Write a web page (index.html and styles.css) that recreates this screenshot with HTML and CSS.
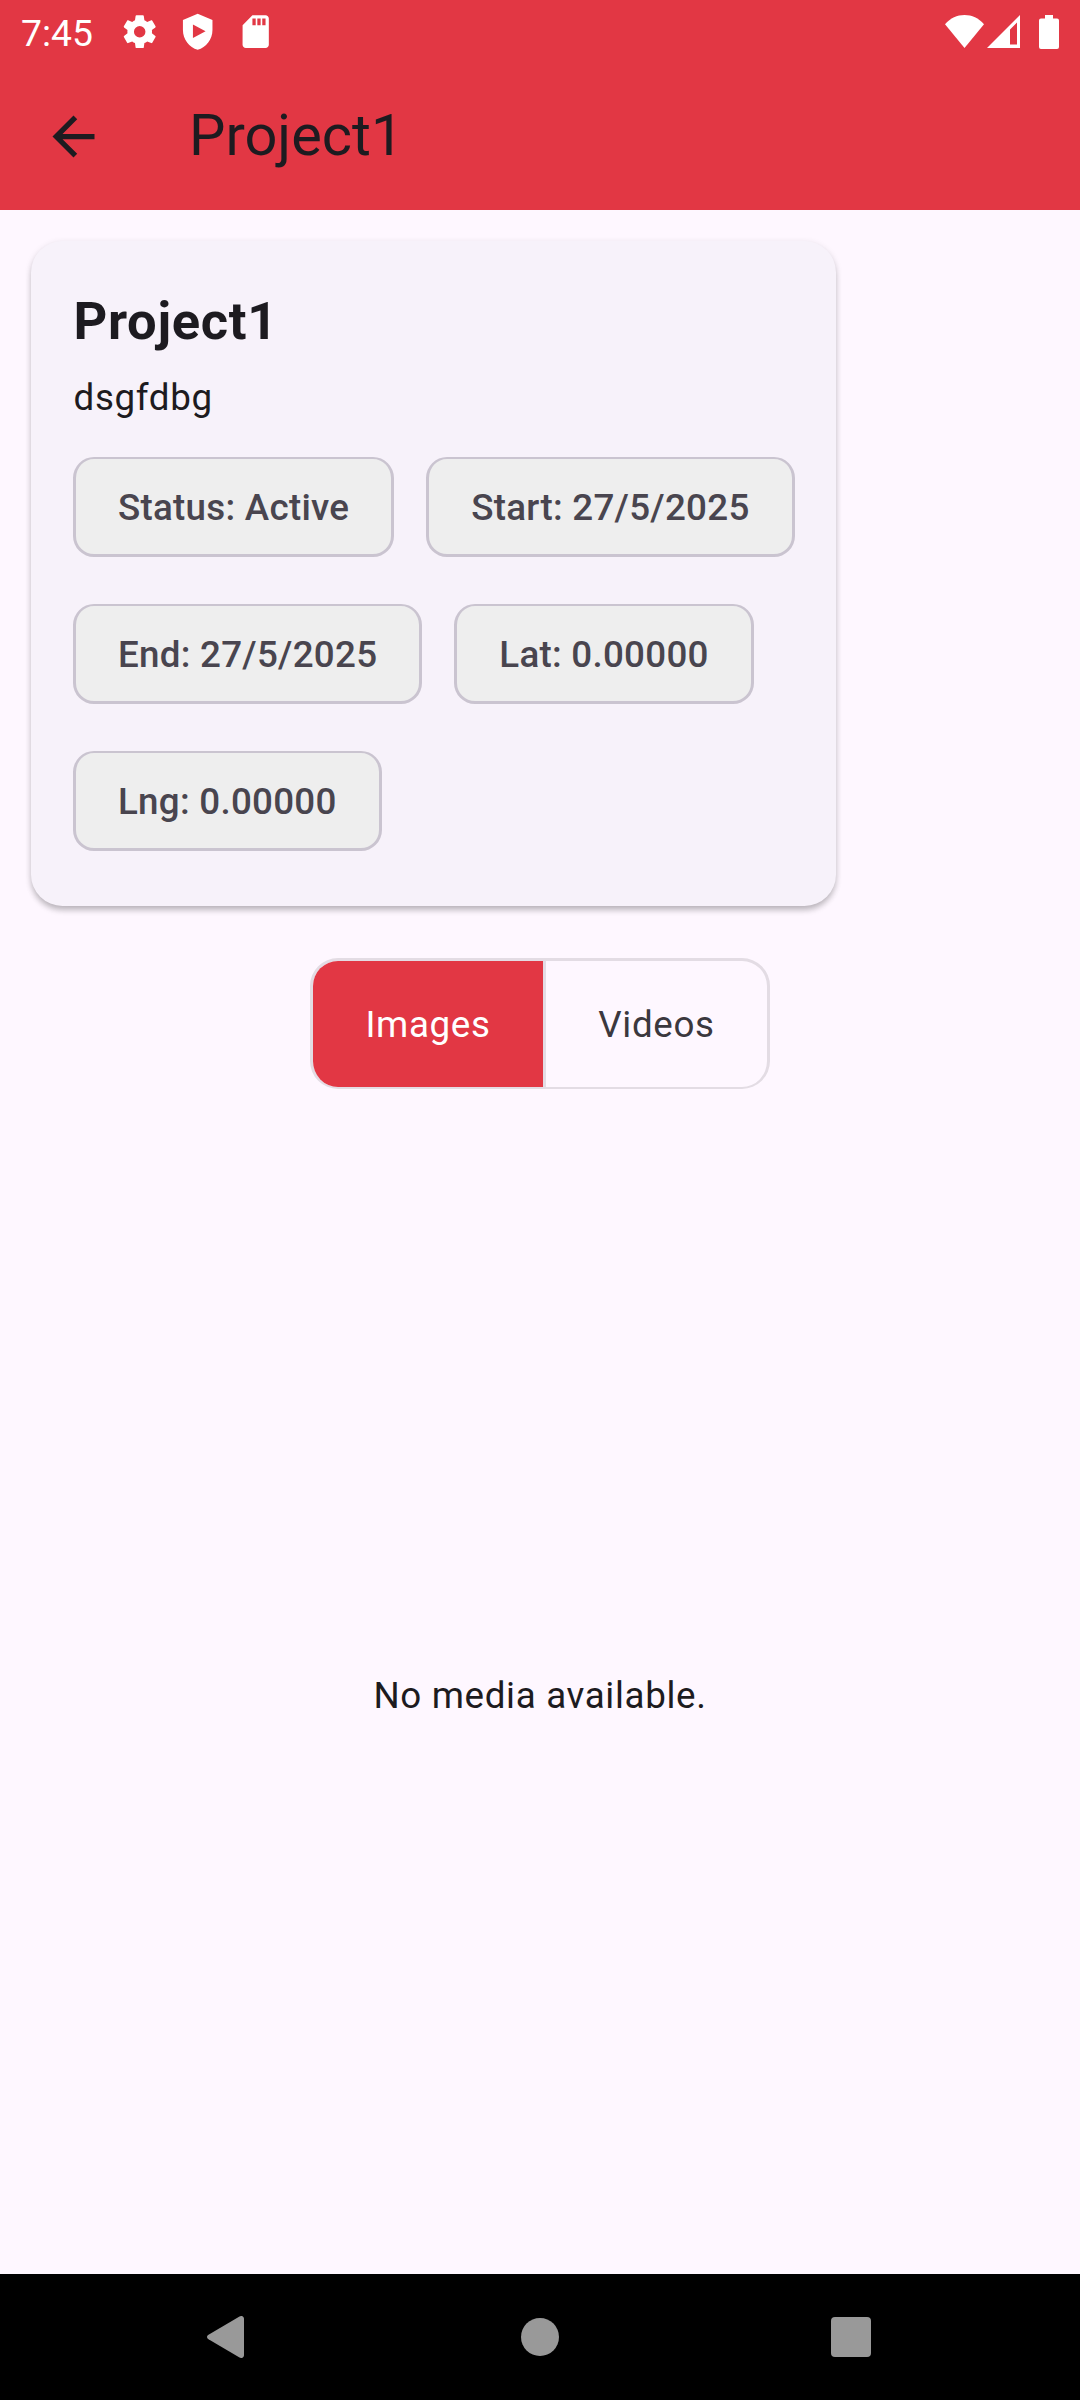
FILE: index.html
```html
<!DOCTYPE html>
<html lang="en">
<head>
<meta charset="utf-8">
<title>Project1</title>
<link rel="stylesheet" href="styles.css">
</head>
<body>
<div class="screen">
  <header class="header">
    <div class="status-bar">
      <span class="clock">7:45</span>
      <div class="status-left">
        <svg class="status-icon" viewBox="0 0 24 24"><path d="M19.43 12.98c.04-.32.07-.64.07-.98s-.03-.66-.07-.98l2.11-1.65c.19-.15.24-.42.12-.64l-2-3.46c-.12-.22-.39-.3-.61-.22l-2.49 1c-.52-.4-1.08-.73-1.69-.98l-.38-2.65A.49.49 0 0 0 14 2h-4c-.25 0-.46.18-.49.42l-.38 2.65c-.61.25-1.17.59-1.69.98l-2.49-1c-.23-.09-.49 0-.61.22l-2 3.46c-.13.22-.07.49.12.64l2.11 1.65c-.04.32-.07.65-.07.98s.03.66.07.98l-2.11 1.65c-.19.15-.24.42-.12.64l2 3.46c.12.22.39.3.61.22l2.49-1c.52.4 1.08.73 1.69.98l.38 2.65c.03.24.24.42.49.42h4c.25 0 .46-.18.49-.42l.38-2.65c.61-.25 1.17-.59 1.69-.98l2.49 1c.23.09.49 0 .61-.22l2-3.46c.12-.22.07-.49-.12-.64zM12 15.5a3.5 3.5 0 1 1 0-7 3.5 3.5 0 0 1 0 7z"/></svg>
        <svg class="status-icon" viewBox="0 0 24 24"><path fill-rule="evenodd" d="M12 1 3 4.8V11c0 5.55 3.84 10.74 9 12 5.16-1.26 9-6.45 9-12V4.8zM9.1 7.6v8.2l7.7-4.1z"/></svg>
        <svg class="status-icon" viewBox="0 0 24 24"><path d="M18 2h-8L4.020 8 4 20c0 1.100.9 2 2 2h12c1.100 0 2-.9 2-2V4c0-1.100-.9-2-2-2zm-6 6h-2V4h2zm3 0h-2V4h2zm3 0h-2V4h2z"/></svg>
      </div>
      <div class="status-right">
        <svg class="wifi" viewBox="0 0 39 33"><path d="M19.500 33 0 9.200C5.500 3 12 0 19.500 0S33.500 3 39 9.200z"/></svg>
        <svg class="signal" viewBox="0 0 33 33"><path fill-rule="evenodd" d="M33 0v33H0zM30 7.500l-7 7V29.500h7z"/></svg>
        <svg class="battery" viewBox="0 0 20 34"><path d="M6 0h8v3.500h4a2 2 0 0 1 2 2V32a2 2 0 0 1-2 2H2a2 2 0 0 1-2-2V5.500a2 2 0 0 1 2-2h4z"/></svg>
      </div>
    </div>
    <div class="app-bar">
      <svg class="back" viewBox="0 0 24 24"><path d="M20 11H7.830l5.590-5.590L12 4l-8 8 8 8 1.410-1.410L7.830 13H20z"/></svg>
      <h1 class="app-title">Project1</h1>
    </div>
  </header>

  <main class="content">
    <section class="card">
      <h2 class="card-title">Project1</h2>
      <p class="card-text">dsgfdbg</p>
      <div class="chips">
        <span class="chip">Status: Active</span>
        <span class="chip">Start: 27/5/2025</span>
        <span class="chip">End: 27/5/2025</span>
        <span class="chip">Lat: 0.00000</span>
        <span class="chip">Lng: 0.00000</span>
      </div>
    </section>
    <div class="toggle">
      <button class="toggle-item selected">Images</button>
      <button class="toggle-item">Videos</button>
    </div>
    <div class="empty">No media available.</div>
  </main>

  <nav class="nav-bar">
    <svg class="nav-back" viewBox="0 0 37 42"><path d="M32.500.5C34.800-.8 37 .5 37 3v36c0 2.500-2.200 3.800-4.500 2.500L1.500 23.200c-2-1.200-2-3.200 0-4.400z"/></svg>
    <svg class="nav-home" viewBox="0 0 38 38"><circle cx="19" cy="19" r="19"/></svg>
    <svg class="nav-recent" viewBox="0 0 40 40"><rect width="40" height="40" rx="4"/></svg>
  </nav>
</div>
</body>
</html>
```
FILE: styles.css
```css
* { box-sizing: border-box; }

body {
  margin: 0;
  font-family: Roboto, sans-serif;
  color: #1d1b20;
}

svg { display: block; flex: none; }

.screen {
  width: 1080px;
  height: 2400px;
  display: flex;
  flex-direction: column;
  background: #fef7ff;
}

.header { height: 210px; background: #e23744; }

.status-bar {
  height: 63px;
  display: flex;
  align-items: center;
  padding: 0 21px 0 21px;
  color: #fff;
  fill: #fff;
}

.clock { width: 99px; font-size: 37.300px; line-height: 43px; padding-top: 3px; }

.status-left { display: flex; gap: 18.600px; }
.status-icon { width: 39.400px; height: 39.400px; }

.status-right { display: flex; margin-left: auto; }
.wifi { width: 39px; height: 33px; }
.signal { width: 33px; height: 33px; margin-left: 3px; }
.battery { width: 20px; height: 34px; margin-left: 19px; }

.app-bar {
  height: 147px;
  display: flex;
  align-items: center;
  padding-left: 42px;
}

.back { width: 63px; height: 63px; fill: #1d1b20; }

.app-title {
  margin: 0 0 2px 84px;
  font-size: 57.750px;
  font-weight: 400;
  line-height: 73.500px;
}

.content {
  flex: 1;
  display: flex;
  flex-direction: column;
  padding-top: 31px;
}

.card {
  width: 805px;
  height: 665px;
  margin-left: 31px;
  padding: 43px 0 0 42px;
  border-radius: 31.500px;
  background: #f7f2fa;
  box-shadow: 0 5px 6px -1px rgba(0, 0, 0, .2), 0 2px 7px rgba(0, 0, 0, .12);
}

.card-title {
  margin: 0 0 0 .5px;
  font-size: 52.500px;
  font-weight: 700;
  line-height: 75px;
  letter-spacing: .656px;
}

.card-text {
  margin: 12px 0 0 .5px;
  font-size: 36.750px;
  line-height: 53px;
  letter-spacing: .656px;
}

.chips {
  display: flex;
  flex-wrap: wrap;
  gap: 47px 32px;
  padding-top: 33px;
}

.chip {
  height: 100px;
  padding: 0 42px;
  border: 3px solid #cac4d0;
  border-top-width: 2px;
  border-radius: 21px;
  background: #eee;
  color: #49454f;
  font-size: 36.750px;
  font-weight: 500;
  line-height: 97px;
  letter-spacing: .2625px;
  white-space: nowrap;
}

.toggle {
  align-self: center;
  display: flex;
  width: 460px;
  height: 131px;
  margin-top: 52px;
  border: 3px solid #e3dce4;
  border-bottom-width: 2px;
  border-radius: 28px;
  overflow: hidden;
}

.toggle-item {
  flex: 1;
  border: 0;
  padding: 0;
  background: none;
  color: #3b383e;
  font: 400 36.750px/53px Roboto, sans-serif;
  letter-spacing: .656px;
}

.toggle-item + .toggle-item { border-left: 3px solid #e3dce4; }

.toggle-item.selected { flex: 0 0 230px; background: #e23744; color: #fff; }

.empty {
  flex: 1;
  display: flex;
  align-items: center;
  justify-content: center;
  padding-top: 27px;
  font-size: 36.750px;
  line-height: 53px;
  letter-spacing: .656px;
}

.nav-bar {
  height: 126px;
  display: flex;
  align-items: center;
  padding-left: 207px;
  background: #000;
  fill: #999;
}

.nav-back { width: 37px; height: 42px; }
.nav-home { width: 38px; height: 38px; margin-left: 277px; }
.nav-recent { width: 40px; height: 40px; margin-left: 272px; }
```
